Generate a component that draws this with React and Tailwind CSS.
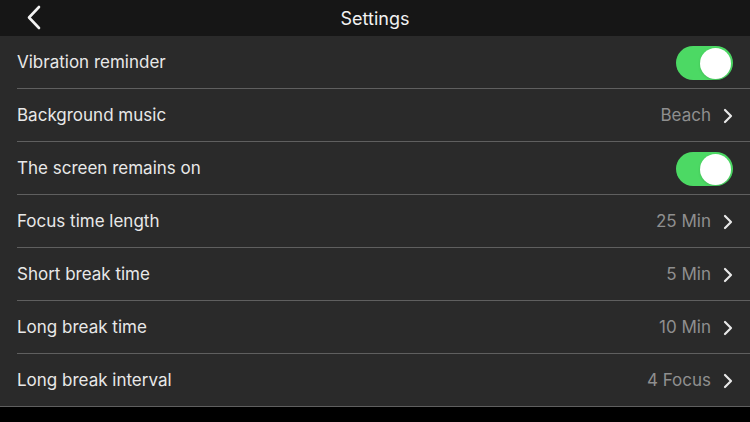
const rows = [
  { label: 'Vibration reminder', toggle: true },
  { label: 'Background music', value: 'Beach' },
  { label: 'The screen remains on', toggle: true },
  { label: 'Focus time length', value: '25 Min' },
  { label: 'Short break time', value: '5 Min' },
  { label: 'Long break time', value: '10 Min' },
  { label: 'Long break interval', value: '4 Focus' },
];

function Toggle() {
  return (
    <div className="w-[57px] h-[34px] rounded-full bg-[#4cd964] flex items-center justify-end pr-[2px]">
      <div className="w-[31px] h-[31px] rounded-full bg-white shadow" />
    </div>
  );
}

function Chevron() {
  return (
    <svg width="10" height="16" viewBox="0 0 10 16" fill="none">
      <path d="M2 2L8 8L2 14" stroke="#e8e8e8" strokeWidth="2.2" strokeLinecap="round" strokeLinejoin="round" />
    </svg>
  );
}

export default function App() {
  return (
    <div className="w-[750px] h-[422px] bg-black flex flex-col font-['Inter','Liberation_Sans',sans-serif] overflow-hidden">
      {/* Header */}
      <div className="h-[36px] bg-[#161616] flex items-center relative shrink-0">
        <svg className="absolute left-[26px] top-[5px]" width="16" height="25" viewBox="0 0 16 25" fill="none">
          <path d="M13 2L3 12.5L13 23" stroke="#f2f2f2" strokeWidth="2.6" strokeLinecap="round" strokeLinejoin="round" />
        </svg>
        <div className="flex-1 text-center text-[18px] text-[#f2f2f2] pt-px">Settings</div>
      </div>

      {/* Rows */}
      <div className="bg-[#2a2a2a] flex flex-col">
        {rows.map((r, i) => (
          <div key={r.label} className={i === rows.length - 1 ? 'border-b border-[#5f5f5f]' : ''}>
            <div className="h-[52px] flex items-center pl-[17px] pr-[17px] pt-[2px]">
              <span className="flex-1 text-[17px] text-[#e8e8e8]">{r.label}</span>
              {r.toggle ? (
                <Toggle />
              ) : (
                <div className="flex items-center gap-[12px]">
                  <span className="text-[17px] text-[#8f8f8f]">{r.value}</span>
                  <Chevron />
                </div>
              )}
            </div>
            {i !== rows.length - 1 && <div className="ml-[17px] h-px bg-[#5f5f5f]" />}
          </div>
        ))}
      </div>
    </div>
  );
}
